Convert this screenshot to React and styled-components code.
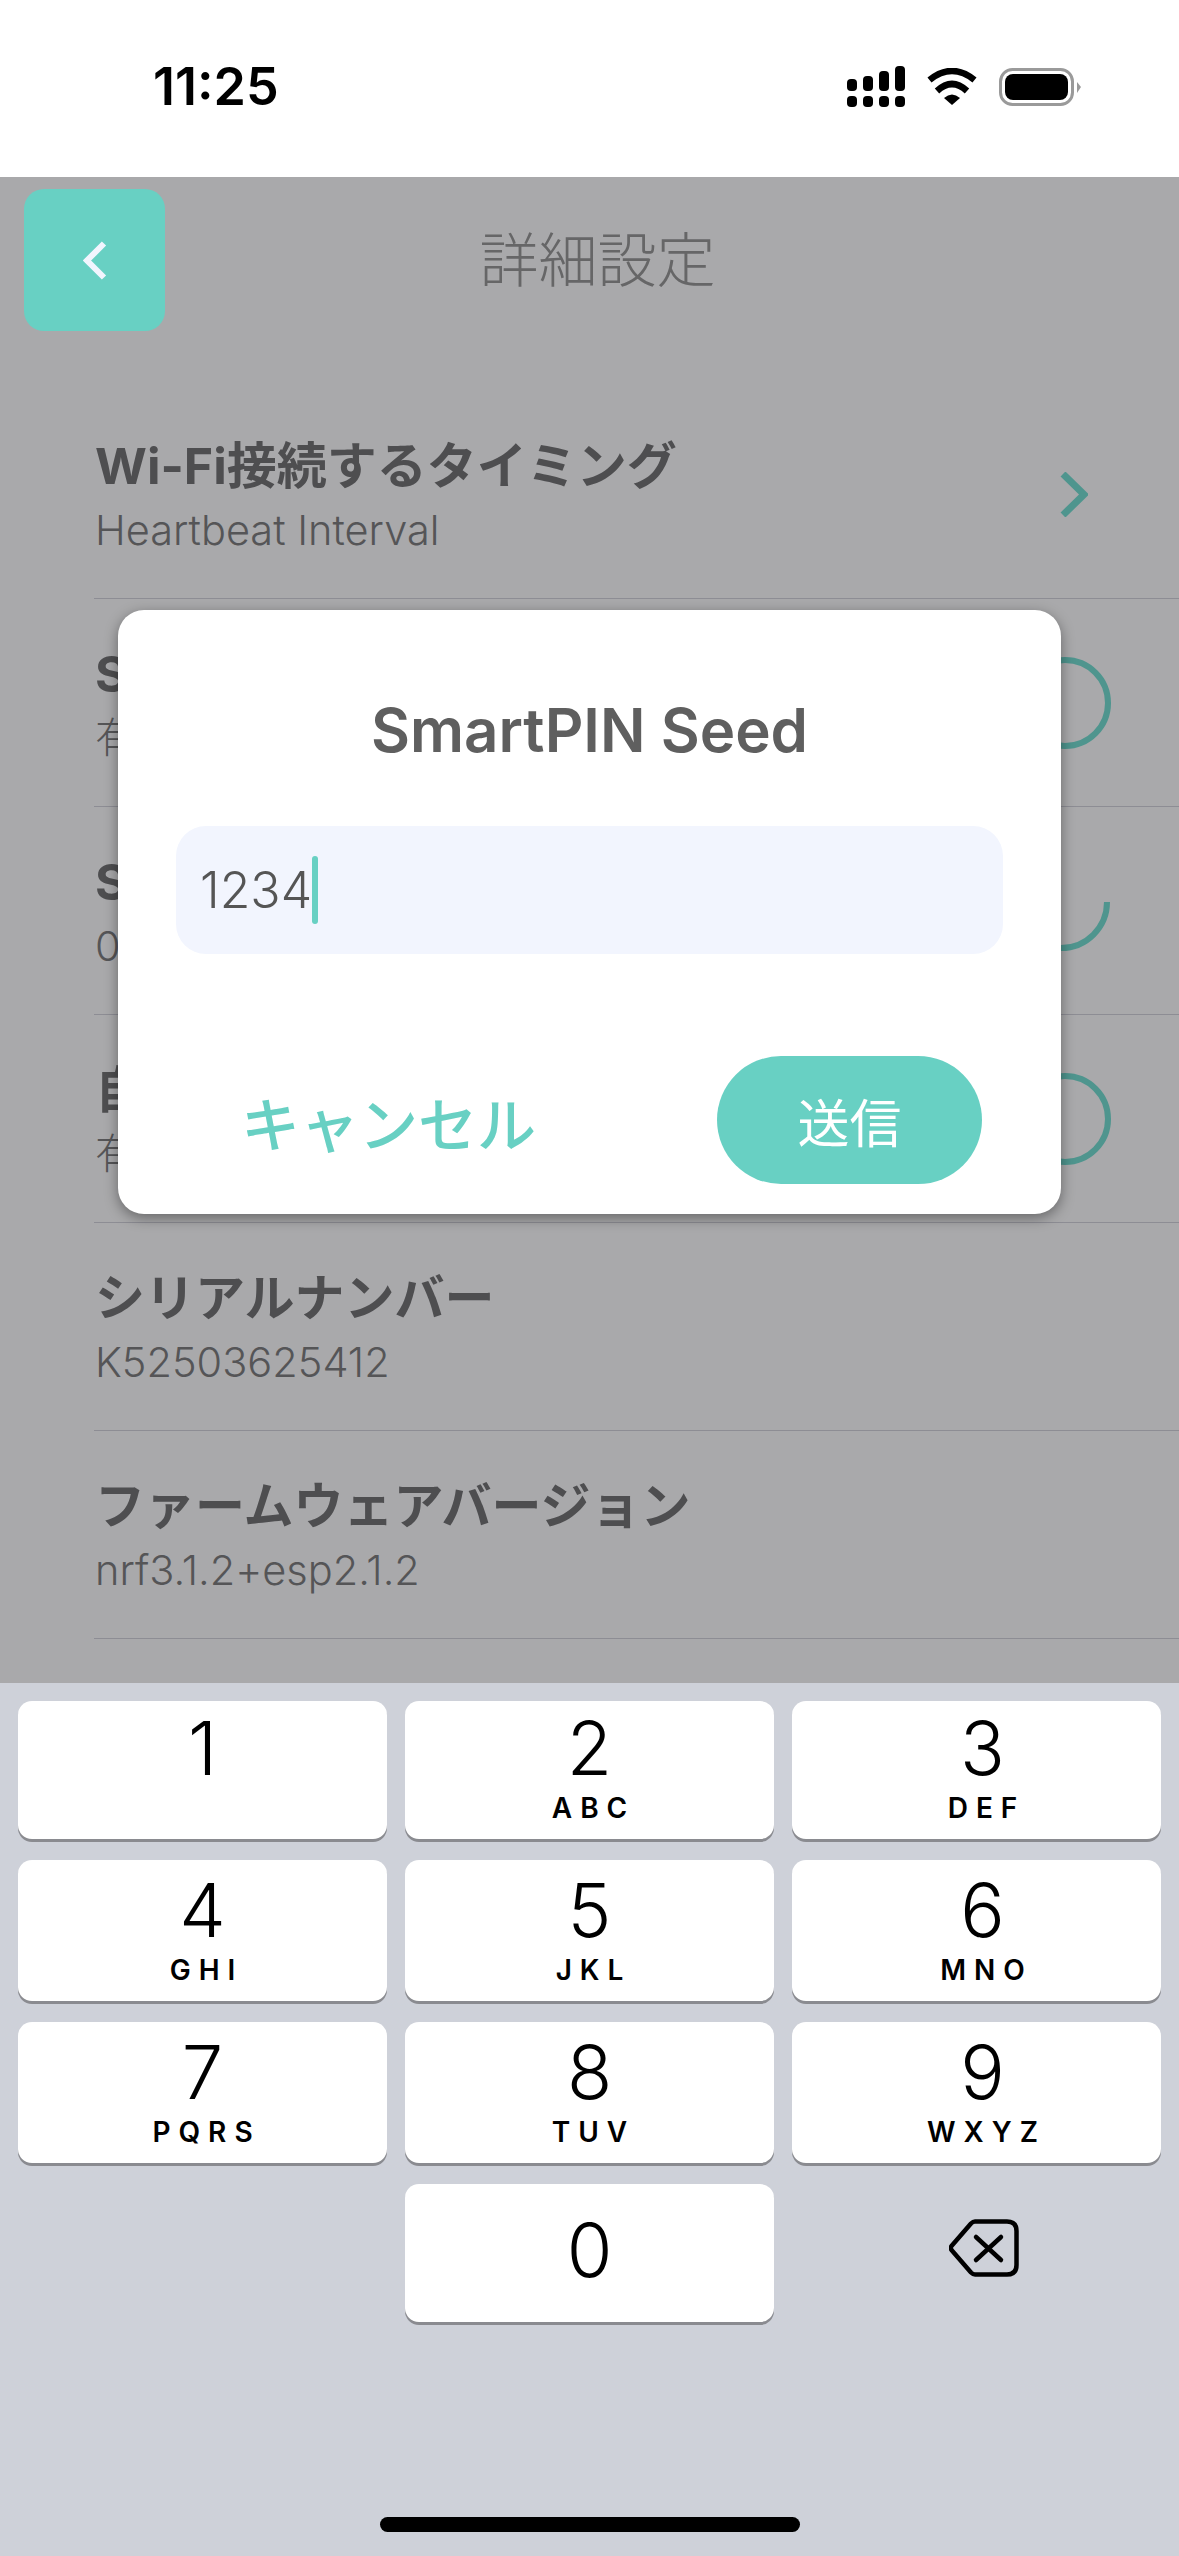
import React from "react";
import styled, { createGlobalStyle } from "styled-components";

const Global = createGlobalStyle`
  html, body { margin: 0; padding: 0; background: #fff; }
  * { box-sizing: border-box; }
  body { font-family: Inter, "Noto Sans CJK JP", sans-serif; }
`;

const Phone = styled.div`
  width: 1179px;
  height: 2556px;
  display: flex;
  flex-direction: column;
  overflow: hidden;
`;

const StatusBar = styled.div`
  height: 177px;
  background: #fff;
  padding: 0 98px 4px 153px;
  display: flex;
  align-items: center;
  justify-content: space-between;
`;

const Time = styled.div`
  font-size: 52px;
  font-weight: 600;
  color: #000;
  letter-spacing: 0;
`;

const StatusIcons = styled.div`
  display: flex;
  align-items: center;
  gap: 22px;
`;

const Content = styled.div`
  position: relative;
  flex: 1;
  background: #a9a9ab;
  padding-top: 12px;
  overflow: hidden;
`;

const Header = styled.div`
  height: 142px;
  padding-left: 24px;
  display: grid;
  grid-template-columns: 141px 1fr 149px;
  align-items: start;
`;

const BackButton = styled.div`
  width: 141px;
  height: 142px;
  background: #68d0c3;
  border-radius: 20px;
  display: flex;
  align-items: center;
  justify-content: center;
`;

const Title = styled.div`
  text-align: center;
  font-size: 59px;
  font-weight: 300;
  line-height: 70px;
  margin-top: 37px;
  color: #666667;
`;

const List = styled.div`
  margin: 60px 0 0 94px;
`;

const Row = styled.div`
  height: 208px;
  padding: 46px 91px 0 1px;
  border-bottom: 1.5px solid #8d8d94;
  display: flex;
  align-items: flex-start;
  justify-content: space-between;
`;

const RowText = styled.div`
  display: flex;
  flex-direction: column;
  gap: 10px;
`;

const RowTitle = styled.div`
  font-size: 50px;
  line-height: 58px;
  font-weight: 700;
  color: #4e4e50;
  white-space: nowrap;
`;

const RowSub = styled.div`
  font-size: 41.5px;
  line-height: 50px;
  font-weight: 300;
  color: #555557;
  white-space: nowrap;
`;

const Ring = styled.div`
  width: 92px;
  height: 92px;
  margin: 12px -23px 0 0;
  border-radius: 50%;
  border: 6px solid #4f958e;
`;

const ArcSlot = styled.div`
  margin: 49px -22px 0 0;
  display: flex;
`;

const Chevron = styled.div`
  margin: 35px 0 0 0;
  display: flex;
`;

const Modal = styled.div`
  position: absolute;
  left: 118px;
  top: 433px;
  width: 943px;
  height: 604px;
  background: #fff;
  border-radius: 26px;
  padding: 80px 58px 0;
  box-shadow: 0 4px 14px rgba(0, 0, 0, 0.4);
`;

const ModalTitle = styled.div`
  text-align: center;
  font-size: 60px;
  line-height: 80px;
  font-weight: 600;
  color: #5f5f5f;
`;

const Input = styled.div`
  margin-top: 56px;
  height: 128px;
  background: #f2f5fe;
  border-radius: 30px;
  padding-left: 24px;
  display: flex;
  align-items: center;
  font-size: 50px;
  font-weight: 300;
  color: #555;
`;

const Caret = styled.span`
  width: 6px;
  height: 68px;
  border-radius: 3px;
  background: #68d0c3;
`;

const Actions = styled.div`
  margin-top: 102px;
  padding: 0 21px 0 65px;
  display: flex;
  align-items: center;
  justify-content: space-between;
`;

const Cancel = styled.div`
  font-size: 59px;
  font-weight: 500;
  line-height: 80px;
  margin-top: 12px;
  color: #68d0c3;
  white-space: nowrap;
`;

const Submit = styled.div`
  width: 265px;
  height: 128px;
  border-radius: 64px;
  background: #68d0c3;
  color: #fff;
  font-size: 52px;
  font-weight: 400;
  display: flex;
  align-items: center;
  justify-content: center;
`;

const Keyboard = styled.div`
  height: 873px;
  background: #ced1d9;
  padding: 18px 18px 0;
  position: relative;
`;

const KeyGrid = styled.div`
  display: grid;
  grid-template-columns: repeat(3, 369px);
  grid-template-rows: 138px 141px 141px 138px;
  column-gap: 18px;
  row-gap: 21px;
`;

const Key = styled.div`
  background: #fff;
  border-radius: 14px;
  box-shadow: 0 3px 0 #8a8b90;
  color: #000;
  display: flex;
  flex-direction: column;
  align-items: center;
  padding-top: ${(p) => p.$top}px;
  padding-left: ${(p) => p.$left || 0}px;
`;

const Digit = styled.div`
  font-size: 74px;
  line-height: 74px;
  font-weight: 300;
`;

const Letters = styled.div`
  font-size: 28px;
  line-height: 34px;
  font-weight: 600;
  letter-spacing: 8px;
  margin: 6px 0 0 8px;
`;

const Blank = styled.div``;

const Delete = styled.div`
  display: flex;
  align-items: center;
  justify-content: center;
  padding: 0 0 10px 14px;
`;

const HomeBar = styled.div`
  position: absolute;
  left: 380px;
  top: 834px;
  width: 420px;
  height: 15px;
  border-radius: 8px;
  background: #000;
`;

const SignalIcon = () => (
  <svg width="58" height="41" viewBox="0 0 58 41">
    <rect x="0" y="13" width="10" height="12" rx="4" />
    <rect x="16" y="10" width="10" height="15" rx="4" />
    <rect x="32" y="5" width="10" height="20" rx="4" />
    <rect x="48" y="0" width="10" height="25" rx="4" />
    <rect x="0" y="30" width="10" height="11" rx="4" />
    <rect x="16" y="30" width="10" height="11" rx="4" />
    <rect x="32" y="30" width="10" height="11" rx="4" />
    <rect x="48" y="30" width="10" height="11" rx="4" />
  </svg>
);

const WifiIcon = () => (
  <svg width="50" height="37" viewBox="0 0 50 37">
    <path d="M2.5 12 Q25 -6 47.5 12" fill="none" stroke="#000" strokeWidth="6.5" />
    <path d="M10 23 Q25 9 40 23" fill="none" stroke="#000" strokeWidth="6.5" />
    <path d="M17 30 Q25 23 33 30 L25 37 Z" fill="#000" />
  </svg>
);

const BatteryIcon = () => (
  <svg width="82" height="38" viewBox="0 0 82 38">
    <rect x="1.5" y="1.5" width="72" height="35" rx="12" fill="none" stroke="#9a9a9a" strokeWidth="3" />
    <rect x="6" y="6" width="63" height="26" rx="8" fill="#000" />
    <path d="M78 14 L82 19 L78 25 Z" fill="#9a9a9a" />
  </svg>
);

const BackIcon = () => (
  <svg width="24" height="39" viewBox="0 0 24 39">
    <path d="M21 2.5 L4 19.5 L21 36.5" fill="none" stroke="#f2f5fe" strokeWidth="6" />
  </svg>
);

const ChevronIcon = () => (
  <svg width="28" height="45" viewBox="0 0 28 45">
    <path d="M3 2 L24 22.5 L3 43" fill="none" stroke="#4f958e" strokeWidth="7" />
  </svg>
);

const ArcIcon = () => (
  <svg width="52" height="52" viewBox="0 0 52 52">
    <path d="M49 0 A46 46 0 0 1 3 46" fill="none" stroke="#4f958e" strokeWidth="6" />
  </svg>
);

const BackspaceIcon = () => (
  <svg width="70" height="58" viewBox="0 0 70 58" fill="none" stroke="#000" strokeLinecap="round" strokeLinejoin="round">
    <path d="M26 2.5 H58 Q67.5 2.5 67.5 12 V46 Q67.5 55.5 58 55.5 H26 Q24 55.5 22 53.5 L2.5 31 Q1 29 2.5 27 L22 4.5 Q24 2.5 26 2.5 Z" strokeWidth="4.5" />
    <path d="M27 18 L52 41 M52 18 L27 41" strokeWidth="4.5" />
  </svg>
);

const rows = [
  { title: "Wi-Fi接続するタイミング", sub: "Heartbeat Interval", side: "chevron" },
  { title: "SmartPIN", sub: "有効", side: "ring" },
  { title: "SmartPIN Seed", sub: "0", side: "arc" },
  { title: "自動更新", sub: "有効", side: "ring" },
  { title: "シリアルナンバー", sub: "K52503625412" },
  { title: "ファームウェアバージョン", sub: "nrf3.1.2+esp2.1.2" },
];

const keys = [
  ["1", ""], ["2", "ABC"], ["3", "DEF"],
  ["4", "GHI"], ["5", "JKL"], ["6", "MNO"],
  ["7", "PQRS"], ["8", "TUV"], ["9", "WXYZ"],
];

const Side = ({ kind }) => {
  if (kind === "chevron") return <Chevron><ChevronIcon /></Chevron>;
  if (kind === "ring") return <Ring />;
  if (kind === "arc") return <ArcSlot><ArcIcon /></ArcSlot>;
  return null;
};

export default function App() {
  return (
    <Phone>
      <Global />
      <StatusBar>
        <Time>11:25</Time>
        <StatusIcons>
          <SignalIcon />
          <WifiIcon />
          <BatteryIcon />
        </StatusIcons>
      </StatusBar>
      <Content>
        <Header>
          <BackButton><BackIcon /></BackButton>
          <Title>詳細設定</Title>
        </Header>
        <List>
          {rows.map((r) => (
            <Row key={r.title}>
              <RowText>
                <RowTitle>{r.title}</RowTitle>
                <RowSub>{r.sub}</RowSub>
              </RowText>
              <Side kind={r.side} />
            </Row>
          ))}
        </List>
        <Modal>
          <ModalTitle>SmartPIN Seed</ModalTitle>
          <Input>1234<Caret /></Input>
          <Actions>
            <Cancel>キャンセル</Cancel>
            <Submit>送信</Submit>
          </Actions>
        </Modal>
      </Content>
      <Keyboard>
        <KeyGrid>
          {keys.map(([d, l], i) => (
            <Key key={d} $top={i < 3 ? 10 : 13} $left={i % 3 === 2 ? 12 : 0}>
              <Digit>{d}</Digit>
              {l && <Letters>{l}</Letters>}
            </Key>
          ))}
          <Blank />
          <Key $top={29}><Digit>0</Digit></Key>
          <Delete><BackspaceIcon /></Delete>
        </KeyGrid>
        <HomeBar />
      </Keyboard>
    </Phone>
  );
}
